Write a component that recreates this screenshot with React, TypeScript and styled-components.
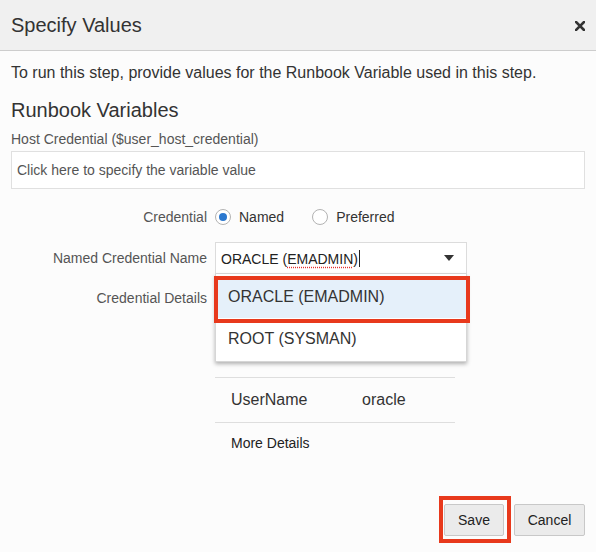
import styled, { createGlobalStyle } from 'styled-components';

const GlobalStyle = createGlobalStyle`
  html, body {
    margin: 0;
    padding: 0;
  }

  body {
    font-family: "Liberation Sans", Arial, sans-serif;
    background: #fcfcfc;
  }
`;

const RED = '#e8391c';

const Dialog = styled.div`
  display: flex;
  flex-direction: column;
  width: 596px;
  height: 552px;
  background: #fcfcfc;
  color: #333;
`;

const Header = styled.header`
  display: flex;
  align-items: center;
  justify-content: space-between;
  height: 50px;
  padding: 0 11px;
  background: #f0f0f0;
  border-bottom: 1px solid #cdcdcd;
`;

const Title = styled.h1`
  margin: 0;
  font-size: 20px;
  font-weight: normal;
  color: #333;
`;

const CloseButton = styled.button`
  display: flex;
  padding: 0;
  margin-top: 2px;
  border: 0;
  background: none;
  cursor: pointer;
`;

const Body = styled.main`
  display: flex;
  flex-direction: column;
  padding: 12px 11px 0;
`;

const Intro = styled.p`
  margin: 0;
  font-size: 16px;
  line-height: 20px;
  color: #333;
`;

const SectionTitle = styled.h2`
  margin: 15px 0 0;
  font-size: 20px;
  line-height: 24px;
  font-weight: normal;
  color: #333;
`;

const FieldLabel = styled.div`
  margin-top: 8px;
  font-size: 14px;
  line-height: 18px;
  color: #555;
`;

const ValueBox = styled.div`
  box-sizing: border-box;
  display: flex;
  align-items: center;
  height: 38px;
  margin-top: 3px;
  padding-left: 5px;
  background: #fff;
  border: 1px solid #e0e0e0;
  font-size: 14px;
  color: #555;
`;

const Form = styled.div`
  display: grid;
  grid-template-columns: 196px 1fr;
  column-gap: 8px;
  row-gap: 10px;
  margin-top: 13px;
`;

const RowLabel = styled.div<{ $height: number }>`
  display: flex;
  align-items: center;
  justify-content: flex-end;
  height: ${p => p.$height}px;
  font-size: 14px;
  color: #555;
`;

const RadioGroup = styled.div`
  display: flex;
  align-items: center;
  height: 30px;
`;

const RadioOption = styled.label`
  display: flex;
  align-items: center;
  gap: 8px;
  margin-right: 28px;
  font-size: 14px;
  color: #333;
`;

const RadioCircle = styled.span<{ $checked?: boolean }>`
  box-sizing: border-box;
  display: flex;
  align-items: center;
  justify-content: center;
  width: 16px;
  height: 16px;
  border-radius: 50%;
  border: 1px solid #b3b3b3;
  background: #fff;

  &::after {
    content: '';
    display: ${p => (p.$checked ? 'block' : 'none')};
    width: 8px;
    height: 8px;
    border-radius: 50%;
    background: #2b78cf;
  }
`;

const Select = styled.div`
  position: relative;
  width: 252px;
`;

const SelectInput = styled.div`
  box-sizing: border-box;
  display: flex;
  align-items: center;
  justify-content: space-between;
  height: 32px;
  padding: 0 12px 0 5px;
  background: #fff;
  border: 1px solid #dcdcdc;
  font-size: 14px;
  color: #222;
`;

const Misspelled = styled.span`
  text-decoration: underline dotted #e53030;
  text-underline-offset: 3px;
`;

const Caret = styled.span`
  display: inline-block;
  width: 1px;
  height: 17px;
  margin-left: 1px;
  vertical-align: -3px;
  background: #222;
`;

const Arrow = styled.span`
  width: 0;
  height: 0;
  border-left: 5px solid transparent;
  border-right: 5px solid transparent;
  border-top: 6px solid #333;
`;

const ListBox = styled.ul`
  position: absolute;
  top: 100%;
  left: 0;
  right: 0;
  z-index: 2;
  margin: 0;
  padding: 2px 0 1px;
  list-style: none;
  background: #fff;
  border: 1px solid #d6d6d6;
  border-top: 0;
  box-shadow: 0 2px 4px rgba(0, 0, 0, 0.3);
`;

const ListOption = styled.li<{ $active?: boolean }>`
  position: relative;
  display: flex;
  align-items: center;
  height: 42px;
  padding-left: 12px;
  font-size: 16px;
  color: #333;
  background: ${p => (p.$active ? '#e5f0fa' : '#fff')};

  &::after {
    content: '';
    display: ${p => (p.$active ? 'block' : 'none')};
    position: absolute;
    z-index: 1;
    top: 0;
    bottom: -5px;
    left: -2px;
    right: -4px;
    border: 4px solid ${RED};
  }
`;

const Details = styled.div`
  padding-top: 93px;
`;

const DetailsTable = styled.div`
  width: 240px;
`;

const DetailsRow = styled.div`
  display: flex;
  align-items: center;
  height: 44px;
  border-top: 1px solid #dedede;
  border-bottom: 1px solid #dedede;
  font-size: 16px;
  color: #333;
`;

const DetailsKey = styled.span`
  width: 131px;
  padding-left: 16px;
`;

const MoreDetails = styled.a`
  display: block;
  padding: 10px 0 0 16px;
  font-size: 14px;
  line-height: 20px;
  color: #222;
  text-decoration: none;
`;

const Footer = styled.footer`
  display: flex;
  align-items: center;
  justify-content: flex-end;
  gap: 3px;
  margin-top: auto;
  padding: 0 11px 9px;
`;

const Highlight = styled.div`
  display: flex;
  padding: 4px 3px 3px 1px;
  border: 4px solid ${RED};
`;

const Button = styled.button<{ $width: number }>`
  box-sizing: border-box;
  width: ${p => p.$width}px;
  height: 32px;
  padding: 0;
  background: #ebebeb;
  border: 1px solid #c8c8c8;
  border-radius: 2px;
  font-family: "Liberation Sans", Arial, sans-serif;
  font-size: 14px;
  color: #222;
`;

const CloseIcon = () => (
  <svg width="10" height="10" viewBox="0 0 10 10">
    <path d="M1 1L9 9M9 1L1 9" stroke="#333" strokeWidth="2.6" strokeLinecap="square" />
  </svg>
);

const App = () => {
  return (
    <>
      <GlobalStyle />
      <Dialog>
        <Header>
          <Title>Specify Values</Title>
          <CloseButton aria-label="Close">
            <CloseIcon />
          </CloseButton>
        </Header>
        <Body>
          <Intro>To run this step, provide values for the Runbook Variable used in this step.</Intro>
          <SectionTitle>Runbook Variables</SectionTitle>
          <FieldLabel>Host Credential ($user_host_credential)</FieldLabel>
          <ValueBox>Click here to specify the variable value</ValueBox>
          <Form>
            <RowLabel $height={30}>Credential</RowLabel>
            <RadioGroup>
              <RadioOption>
                <RadioCircle $checked />
                Named
              </RadioOption>
              <RadioOption>
                <RadioCircle />
                Preferred
              </RadioOption>
            </RadioGroup>

            <RowLabel $height={32}>Named Credential Name</RowLabel>
            <Select>
              <SelectInput>
                <span>
                  ORACLE (<Misspelled>EMADMIN</Misspelled>)<Caret />
                </span>
                <Arrow />
              </SelectInput>
              <ListBox>
                <ListOption $active>ORACLE (EMADMIN)</ListOption>
                <ListOption>ROOT (SYSMAN)</ListOption>
              </ListBox>
            </Select>

            <RowLabel $height={28}>Credential Details</RowLabel>
            <Details>
              <DetailsTable>
                <DetailsRow>
                  <DetailsKey>UserName</DetailsKey>
                  <span>oracle</span>
                </DetailsRow>
                <MoreDetails href="#">More Details</MoreDetails>
              </DetailsTable>
            </Details>
          </Form>
        </Body>
        <Footer>
          <Highlight>
            <Button $width={60}>Save</Button>
          </Highlight>
          <Button $width={71}>Cancel</Button>
        </Footer>
      </Dialog>
    </>
  );
};

export default App;
